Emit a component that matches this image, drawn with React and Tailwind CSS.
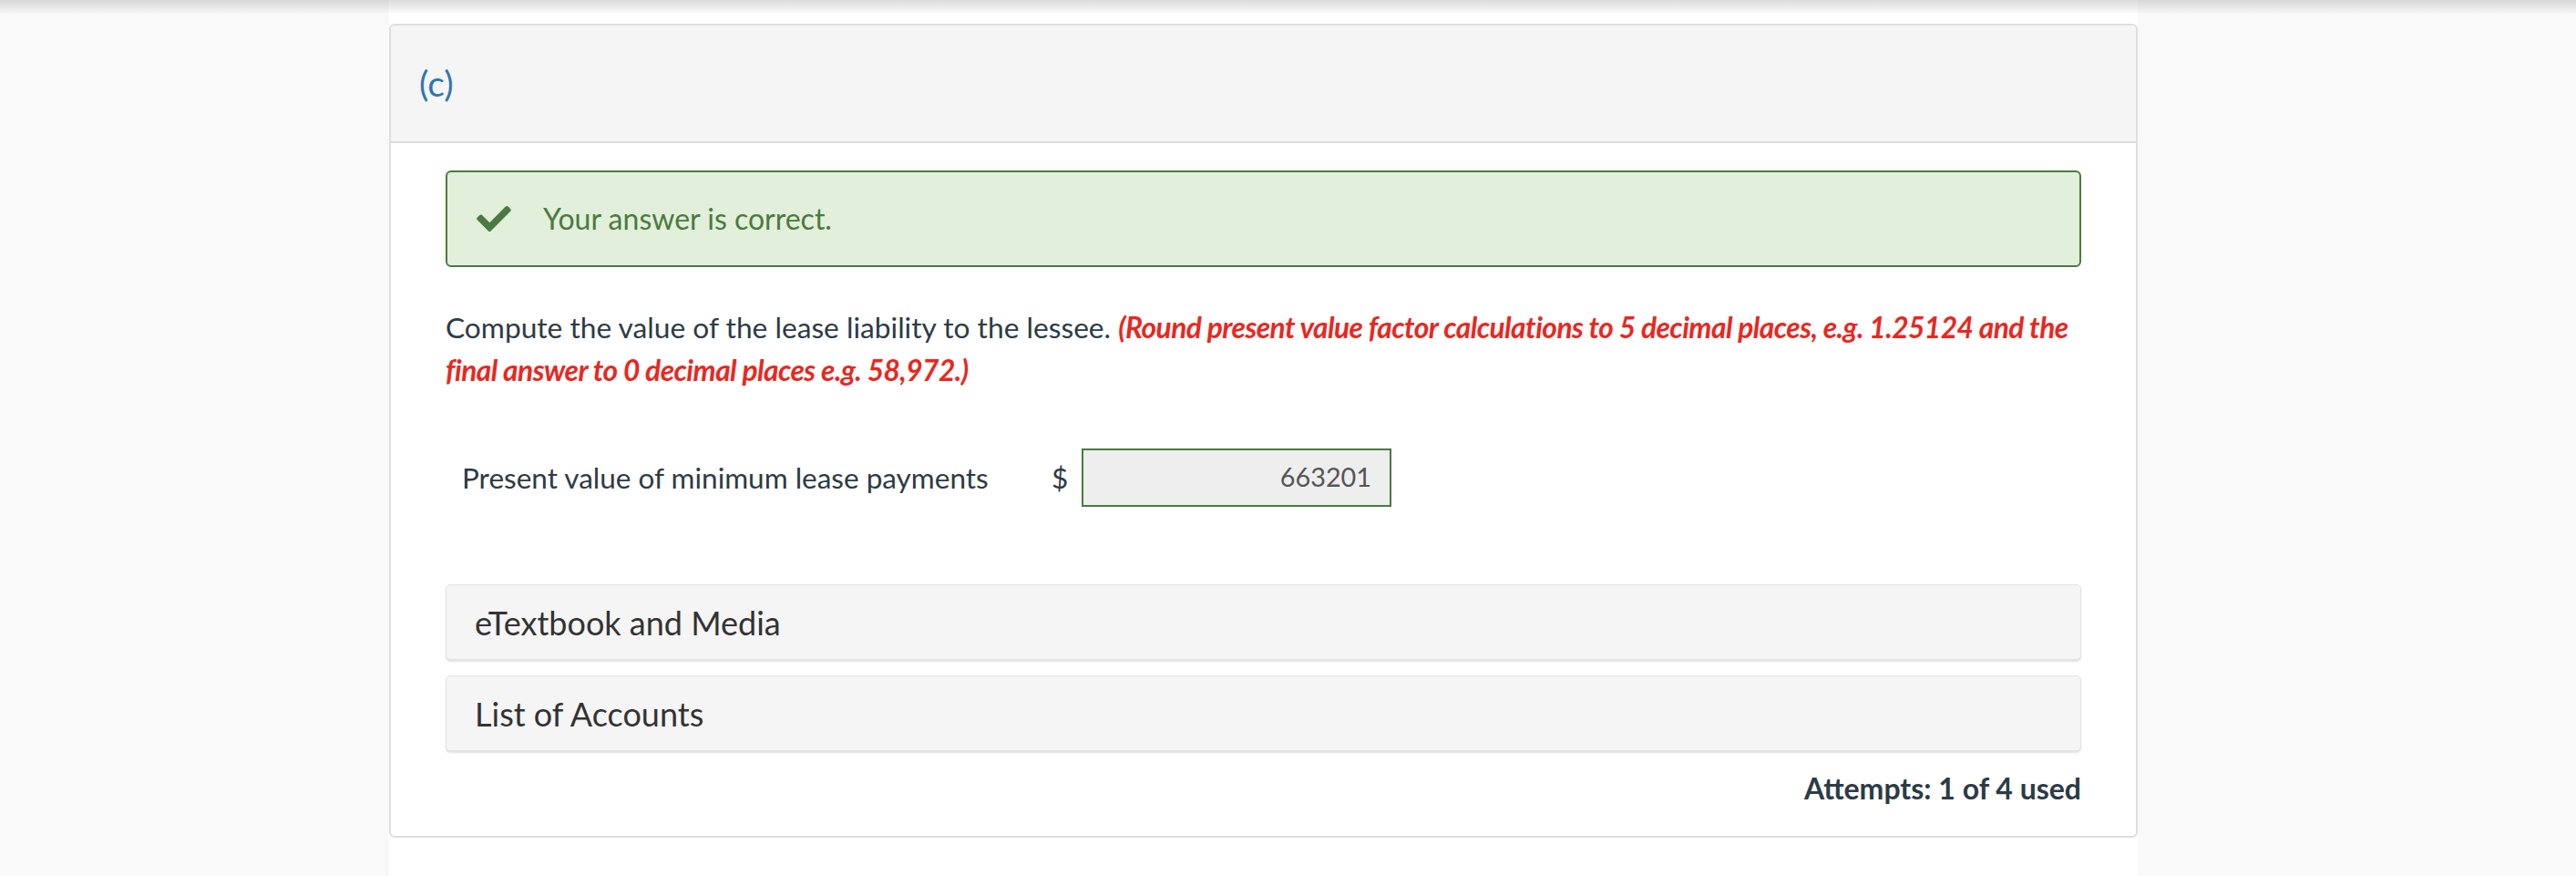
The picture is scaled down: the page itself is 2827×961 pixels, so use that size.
import React from "react";

function CheckIcon() {
  return (
    <svg viewBox="0 65 512 382" className="w-[38px] h-[28px] shrink-0" fill="#4a7a40">
      <path d="M173.898 439.404l-166.4-166.4c-9.997-9.997-9.997-26.206 0-36.204l36.203-36.204c9.997-9.998 26.207-9.998 36.204 0L192 312.69 432.095 72.596c9.997-9.997 26.207-9.997 36.204 0l36.203 36.204c9.997 9.997 9.997 26.206 0 36.204l-294.4 294.401c-9.998 9.997-26.207 9.997-36.204-.001z" />
    </svg>
  );
}

export default function App() {
  return (
    <div className="relative min-h-[961px] bg-[#f9f9f9] font-['Lato','Noto_Sans',sans-serif] text-[#2d3b45]">
      <div className="pointer-events-none absolute left-0 right-0 top-0 h-[16px] bg-gradient-to-b from-[rgba(0,0,0,0.14)] to-transparent" />
      <div className="ml-[427px] w-[1919px] min-h-[961px] bg-white pt-[26px]">
        <div className="overflow-hidden rounded-[6px] border-2 border-[#dedede]">
          <div className="flex h-[129px] items-center border-b-2 border-[#dedede] bg-[#f5f5f5] pl-[31px]">
            <span className="text-[39px] leading-none text-[#2f76b4]">(c)</span>
          </div>
          <div className="px-[60px] pb-[28px] pt-[30px]">
            <div className="flex h-[106px] items-center rounded-[6px] border-2 border-[#4a7a40] bg-[#e2efda] pl-[32px]">
              <CheckIcon />
              <span className="ml-[35px] text-[32px] text-[#4a7a40]">Your answer is correct.</span>
            </div>
            <p className="mt-[43px] text-[31.7px] leading-[47px]">
              Compute the value of the lease liability to the lessee.{" "}
              <strong className="font-bold italic tracking-[-0.55px] text-[#e8281f]">
                (Round present value factor calculations to 5 decimal places, e.g. 1.25124 and the final answer to 0 decimal places e.g. 58,972.)
              </strong>
            </p>
            <div className="mt-[62px] flex items-center">
              <div className="w-[665px] pl-[18px] text-[31.5px] leading-[47px]">Present value of minimum lease payments</div>
              <div className="w-[33px] text-[31.5px] leading-[47px]">$</div>
              <div className="flex h-[64px] w-[340px] items-center justify-end border-2 border-[#4a7a40] bg-[#eeeeee] pr-[20px] text-[28.8px] text-[#555555]">
                663201
              </div>
            </div>
            <div className="mt-[85px] flex h-[83px] items-center rounded-[5px] border border-[#e3e3e3] bg-[#f5f5f5] pl-[31px] text-[36px] text-[#333333] shadow-[0_2px_2px_rgba(0,0,0,0.12)]">
              eTextbook and Media
            </div>
            <div className="mt-[17px] flex h-[83px] items-center rounded-[5px] border border-[#e3e3e3] bg-[#f5f5f5] pl-[31px] text-[36px] text-[#333333] shadow-[0_2px_2px_rgba(0,0,0,0.12)]">
              List of Accounts
            </div>
            <div className="mt-[17px] text-right text-[32px] font-bold leading-[48px]">Attempts: 1 of 4 used</div>
          </div>
        </div>
      </div>
    </div>
  );
}
